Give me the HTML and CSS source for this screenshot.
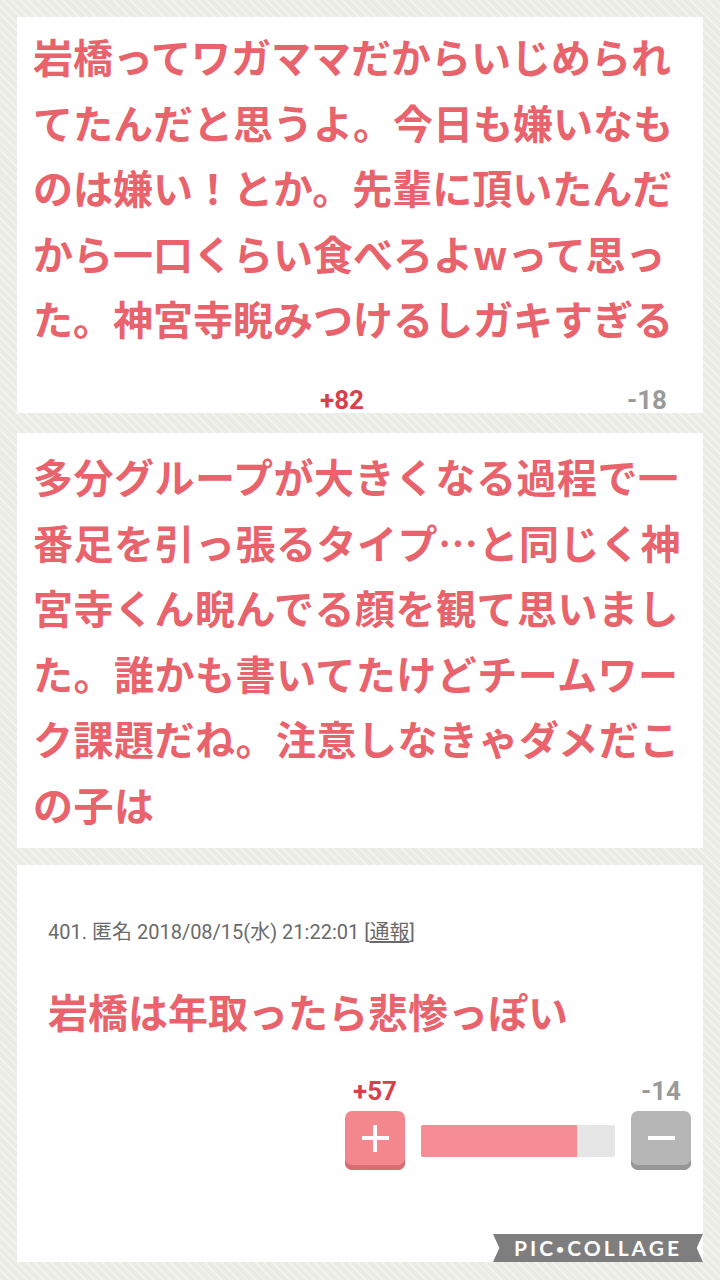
FILE: index.html
```html
<!DOCTYPE html>
<html>

<head>
    <meta charset="utf-8" />
    <title>コメント</title>
    <meta name="viewport" content="width=device-width, initial-scale=1.0" />
    <link rel="stylesheet" href="styles.css">
</head>

<body>
    <div class="collage">
        <div class="panel panel-first">
            <p class="body">岩橋ってワガママだからいじめられてたんだと思うよ。今日も嫌いなものは嫌い！とか。先輩に頂いたんだから一口くらい食べろよwって思った。神宮寺睨みつけるしガキすぎる</p>
            <div class="counts">
                <span class="plus-count">+82</span>
                <span class="minus-count">-18</span>
            </div>
        </div>

        <div class="panel panel-second">
            <p class="body">多分グループが大きくなる過程で一番足を引っ張るタイプ…と同じく神宮寺くん睨んでる顔を観て思いました。誰かも書いてたけどチームワーク課題だね。注意しなきゃダメだこの子は</p>
        </div>

        <div class="panel panel-third">
            <div class="meta">401. 匿名 2018/08/15(水) 21:22:01 [<u>通報</u>]</div>
            <h2 class="title">岩橋は年取ったら悲惨っぽい</h2>
            <div class="vote">
                <span class="vote-num up">+57</span>
                <span></span>
                <span class="vote-num down">-14</span>

                <div class="btn btn-plus"><span class="sign plus"></span></div>
                <div class="bar"><div class="bar-fill" style="width: 80.3%"></div></div>
                <div class="btn btn-minus"><span class="sign"></span></div>
            </div>
            <div class="watermark">PIC<span class="dot">•</span>COLLAGE</div>
        </div>
    </div>
</body>

</html>
```

FILE: styles.css
```css
* {
    margin: 0;
    padding: 0;
    box-sizing: border-box;
}

html {
    font-family: Roboto, "Noto Sans CJK JP", sans-serif;
}

body {
    width: 720px;
    height: 1280px;
    overflow: hidden;
    background-color: #ebebe5;
    background-image: repeating-linear-gradient(45deg, rgba(255, 255, 255, 0.35) 0px, rgba(255, 255, 255, 0.35) 2px, transparent 2px, transparent 6px);
}

.collage {
    display: flex;
    flex-direction: column;
    padding: 17px;
}

.panel {
    background: #fff;
    width: 686px;
    overflow: hidden;
}

.body,
.title {
    font-family: "Noto Sans CJK JP", sans-serif;
    font-weight: 700;
    color: #e8636c;
    font-size: 40px;
}

.body {
    line-height: 65.5px;
}

/* first panel: cropped comment with counts */
.panel-first {
    height: 396px;
    padding: 7px 16px 0 16px;
}

.counts {
    display: flex;
    justify-content: space-between;
    padding: 34px 20px 0 287px;
    font-size: 26px;
    font-weight: 700;
    line-height: 28px;
}

.plus-count {
    color: #d9404c;
}

.minus-count {
    color: #9a9a9a;
}

.panel-second {
    height: 415px;
    margin-top: 20px;
    padding: 11px 14px 0 16px;
}

.panel-second .body {
    letter-spacing: 0.5px;
}

/* last panel: full comment card */
.panel-third {
    height: 397px;
    margin-top: 17px;
    padding: 56px 12px 0 31px;
    position: relative;
}

.meta {
    font-size: 20px;
    color: #6a6a6a;
    line-height: 22px;
}

.meta u {
    text-underline-offset: 2px;
}

.title {
    margin-top: 40px;
    line-height: 56px;
}

.vote {
    margin: 38px 0 0 auto;
    width: 346px;
    display: grid;
    grid-template-columns: 60px 1fr 60px;
    column-gap: 16px;
    row-gap: 6px;
    align-items: center;
}

.vote-num {
    font-size: 26px;
    font-weight: 700;
    text-align: center;
    line-height: 28px;
}

.vote-num.up {
    color: #d9404c;
}

.vote-num.down {
    color: #9a9a9a;
}

.btn {
    height: 59px;
    border-radius: 7px;
    display: flex;
    align-items: center;
    justify-content: center;
    padding-bottom: 5px;
}

.btn-plus {
    background: #f4878d;
    box-shadow: inset 0 -5px 0 #d86c72;
}

.btn-minus {
    background: #b6b6b6;
    box-shadow: inset 0 -5px 0 #969696;
}

.sign {
    width: 27px;
    height: 4px;
    background: #fff;
    position: relative;
}

.sign.plus::after {
    content: "";
    position: absolute;
    left: 11.5px;
    top: -11.5px;
    width: 4px;
    height: 27px;
    background: #fff;
}

.bar {
    height: 32px;
    background: #e6e6e6;
    border-radius: 2px;
    overflow: hidden;
}

.bar-fill {
    height: 100%;
    background: #f68c94;
}

.watermark {
    position: absolute;
    right: 0;
    bottom: 0;
    width: 210px;
    height: 28px;
    background: #7e7e7e;
    color: #fff;
    font-family: Lato, sans-serif;
    font-weight: 700;
    font-size: 21px;
    letter-spacing: 3px;
    line-height: 28px;
    text-align: center;
    clip-path: polygon(0 0, 100% 0, 97% 50%, 100% 100%, 0 100%, 3% 50%);
}

.watermark .dot {
    font-size: 14px;
    vertical-align: 2px;
}
```
